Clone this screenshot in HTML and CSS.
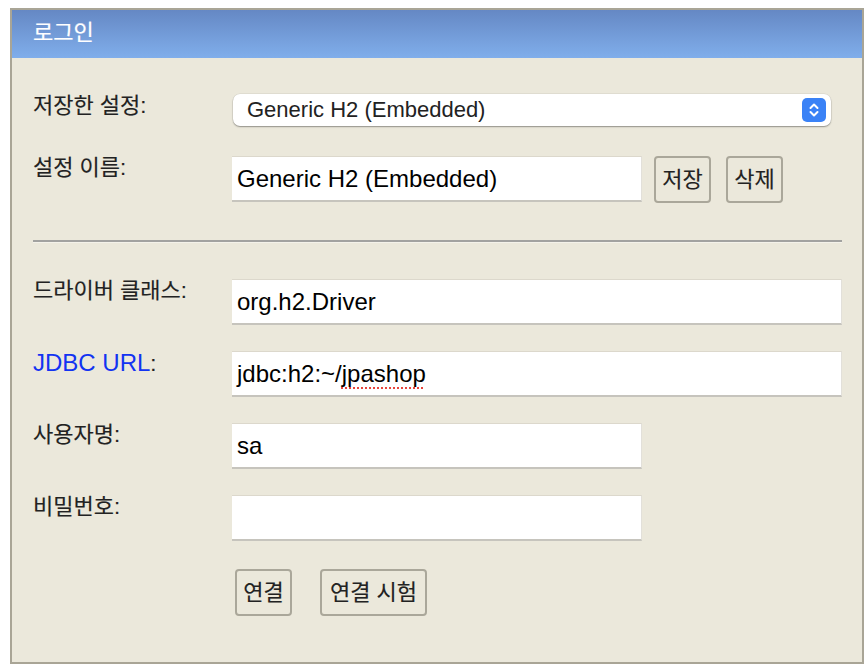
FILE: index.html
```html
<!DOCTYPE html>
<html lang="ko">
<head>
<meta charset="utf-8">
<title>로그인</title>
<link rel="stylesheet" href="styles.css">
</head>
<body>
<div class="panel">
  <div class="header">로그인</div>
  <div class="body">
    <div class="row row-select">
      <div class="label">저장한 설정:</div>
      <div class="select">
        <span class="select-text">Generic H2 (Embedded)</span>
        <span class="stepper">
          <svg width="24" height="24" viewBox="0 0 24 24">
            <path d="M8.5 10 L12 6.5 L15.5 10" fill="none" stroke="#fff" stroke-width="2" stroke-linecap="round" stroke-linejoin="round"/>
            <path d="M8.5 14 L12 17.5 L15.5 14" fill="none" stroke="#fff" stroke-width="2" stroke-linecap="round" stroke-linejoin="round"/>
          </svg>
        </span>
      </div>
    </div>
    <div class="row row-name">
      <div class="label">설정 이름:</div>
      <div class="controls">
        <div class="field short">Generic H2 (Embedded)</div>
        <button class="btn btn-save">저장</button>
        <button class="btn btn-del">삭제</button>
      </div>
    </div>
    <div class="rule"></div>
    <div class="row row-field first">
      <div class="label">드라이버 클래스:</div>
      <div class="field long">org.h2.Driver</div>
    </div>
    <div class="row row-field">
      <div class="label"><span class="link">JDBC URL</span>:</div>
      <div class="field long">jdbc:h2:~/<span class="misspelled">jpashop</span></div>
    </div>
    <div class="row row-field">
      <div class="label">사용자명:</div>
      <div class="field short">sa</div>
    </div>
    <div class="row row-field">
      <div class="label">비밀번호:</div>
      <div class="field short"></div>
    </div>
    <div class="row row-actions">
      <div class="label"></div>
      <div class="controls actions">
        <button class="btn btn-connect">연결</button>
        <button class="btn btn-test">연결 시험</button>
      </div>
    </div>
  </div>
</div>
</body>
</html>
```
FILE: styles.css
```css
* {
  box-sizing: border-box;
}

html, body {
  margin: 0;
  padding: 0;
  background: #ffffff;
}

body {
  font-family: "Liberation Sans", "Noto Sans CJK KR", sans-serif;
  color: #222;
}

.panel {
  margin: 8px 0 0 10px;
  width: 854px;
  height: 656px;
  border: 2px solid #a9a596;
  background: #ebe8db;
  overflow: hidden;
}

.header {
  height: 48px;
  background: linear-gradient(to bottom, #6588c4, #80aeeb);
  color: #ffffff;
  font-size: 22px;
  line-height: 46px;
  padding-left: 21px;
  -webkit-text-stroke: 0.2px #ffffff;
}

.body {
  padding: 36px 20px 0 21px;
}

.row {
  display: grid;
  grid-template-columns: 199px 1fr;
  align-items: start;
}

.label {
  font-size: 22px;
  line-height: 24px;
  color: #222;
  -webkit-text-stroke: 0.15px #222;
}

.link {
  color: #1233f2;
  font-size: 24px;
  -webkit-text-stroke: 0;
}

.select {
  width: 598px;
  height: 32px;
  margin-left: 1px;
  background: #ffffff;
  border-radius: 7px;
  box-shadow: 0 1px 1.5px rgba(0, 0, 0, 0.35), 0 0 0 0.5px rgba(0, 0, 0, 0.08);
  display: flex;
  align-items: center;
  justify-content: space-between;
  padding: 0 5px 0 14px;
}

.select-text {
  font-size: 22px;
  color: #222;
  line-height: 32px;
}

.stepper {
  width: 24px;
  height: 24px;
  border-radius: 5px;
  background: #3a82f6;
  display: flex;
}

.row-name {
  margin-top: 30px;
}

.controls {
  display: flex;
  align-items: flex-start;
}

.field {
  height: 46px;
  background: #ffffff;
  border-top: 1px solid #dcd8cc;
  border-right: 1px solid #e2e0da;
  border-bottom: 2px solid #c6c4bd;
  font-size: 24px;
  line-height: 43px;
  padding-left: 5px;
  color: #000;
  white-space: nowrap;
}

.field.short {
  width: 410px;
}

.field.long {
  width: 610px;
}

.misspelled {
  text-decoration: underline dotted #e8453c;
  text-decoration-thickness: 2px;
  text-underline-offset: 5px;
}

.btn {
  font-family: "Liberation Sans", "Noto Sans CJK KR", sans-serif;
  font-size: 22px;
  color: #222;
  -webkit-text-stroke: 0.15px #222;
  background: #ebe8db;
  border: 2px solid #aaa79a;
  border-radius: 4px;
  height: 47px;
  padding: 0 4px;
  margin: 0;
  line-height: 43px;
}

.btn-save {
  margin-left: 12px;
  width: 57px;
}

.btn-del {
  margin-left: 15px;
  width: 57px;
}

.rule {
  margin-top: 37px;
  height: 3px;
  border-top: 2px solid #a2a2a0;
  border-bottom: 1px solid #f4f2ea;
}

.row-field {
  margin-top: 26px;
}

.row-field.first {
  margin-top: 36px;
}

.row-actions {
  margin-top: 28px;
}

.actions {
  padding-left: 3px;
}

.btn-connect {
  width: 57px;
}

.btn-test {
  margin-left: 28px;
  width: 107px;
}
```
